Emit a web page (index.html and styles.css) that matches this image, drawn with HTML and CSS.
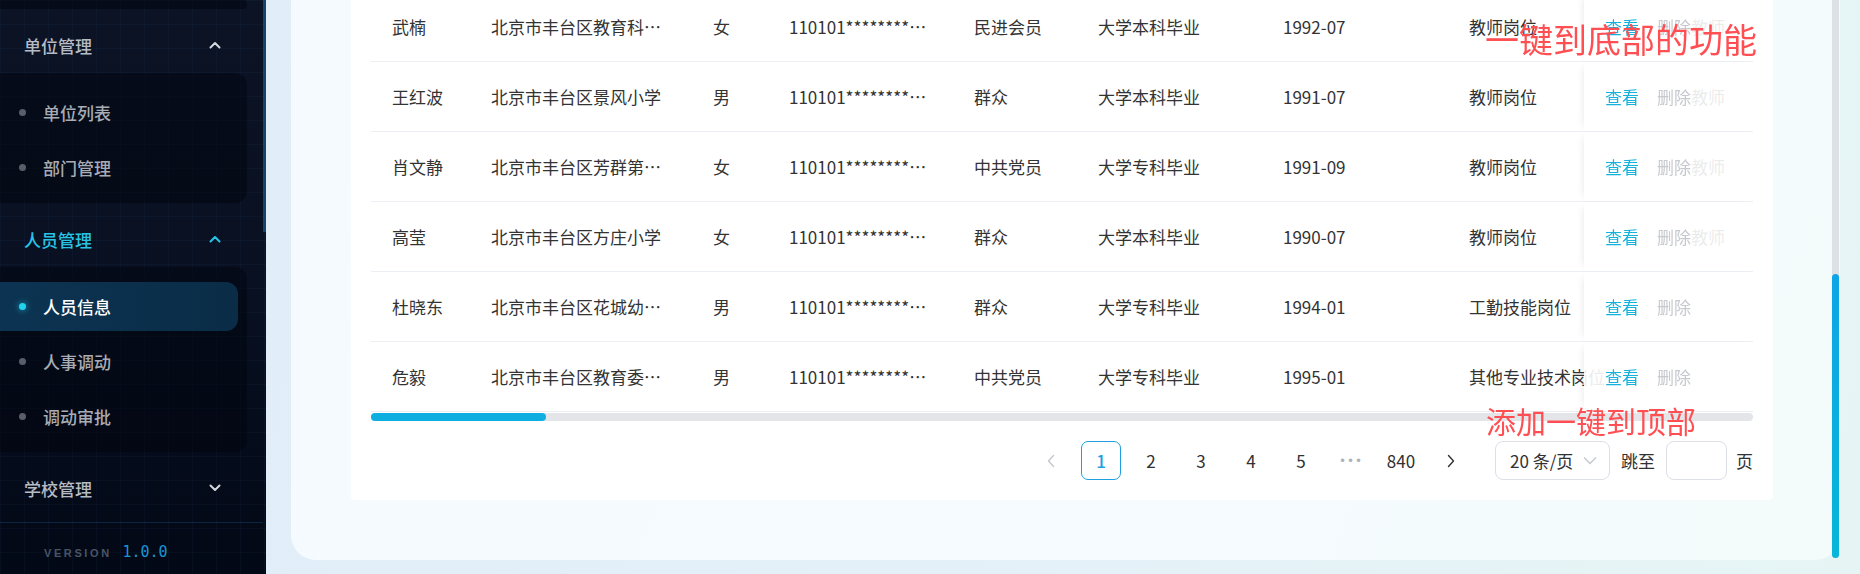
FILE: index.html
```html
<!DOCTYPE html>
<html lang="zh-CN">
<head>
    <meta charset="UTF-8">
    <meta name="viewport" content="width=device-width, initial-scale=1.0">
    <title>人员信息</title>
    <link rel="stylesheet" href="styles.css">
</head>
<body>
    <aside class="sidebar">
        <nav class="menu">
            <div class="submenu submenu-tail"></div>

            <div class="group-title">
                <span>单位管理</span>
                <svg class="chevron" width="12" height="8" viewBox="0 0 12 8"><polyline points="1.5,6.5 6,2 10.5,6.5"/></svg>
            </div>
            <ul class="submenu">
                <li class="item">单位列表</li>
                <li class="item">部门管理</li>
            </ul>

            <div class="group-title open">
                <span>人员管理</span>
                <svg class="chevron" width="12" height="8" viewBox="0 0 12 8"><polyline points="1.5,6.5 6,2 10.5,6.5"/></svg>
            </div>
            <ul class="submenu">
                <li class="item current">人员信息</li>
                <li class="item">人事调动</li>
                <li class="item">调动审批</li>
            </ul>

            <div class="group-title">
                <span>学校管理</span>
                <svg class="chevron" width="12" height="8" viewBox="0 0 12 8"><polyline points="1.5,1.5 6,6 10.5,1.5"/></svg>
            </div>
        </nav>
        <div class="version">VERSION <span class="version-num">1.0.0</span></div>
    </aside>

    <main class="main">
        <section class="card">
            <div class="panel">
                <div class="table-wrap">
                    <table class="staff-table">
                        <colgroup>
                            <col style="width:99px">
                            <col style="width:222px">
                            <col style="width:76px">
                            <col style="width:185px">
                            <col style="width:124px">
                            <col style="width:185px">
                            <col style="width:186px">
                            <col style="width:222px">
                            <col style="width:210px">
                            <col style="width:200px">
                            <col style="width:169px">
                        </colgroup>
                        <tbody>
                            <tr>
                                <td>武楠</td>
                                <td>北京市丰台区教育科学研究院</td>
                                <td>女</td>
                                <td>110101**********2046</td>
                                <td>民进会员</td>
                                <td>大学本科毕业</td>
                                <td>1992-07</td>
                                <td>教师岗位</td>
                                <td>教师</td>
                                <td></td>
                                <td class="actions"><a class="link-view">查看</a><a class="link-del">删除</a></td>
                            </tr>
                            <tr>
                                <td>王红波</td>
                                <td>北京市丰台区景风小学</td>
                                <td>男</td>
                                <td>110101**********3018</td>
                                <td>群众</td>
                                <td>大学本科毕业</td>
                                <td>1991-07</td>
                                <td>教师岗位</td>
                                <td>教师</td>
                                <td></td>
                                <td class="actions"><a class="link-view">查看</a><a class="link-del">删除</a></td>
                            </tr>
                            <tr>
                                <td>肖文静</td>
                                <td>北京市丰台区芳群第二小学</td>
                                <td>女</td>
                                <td>110101**********4527</td>
                                <td>中共党员</td>
                                <td>大学专科毕业</td>
                                <td>1991-09</td>
                                <td>教师岗位</td>
                                <td>教师</td>
                                <td></td>
                                <td class="actions"><a class="link-view">查看</a><a class="link-del">删除</a></td>
                            </tr>
                            <tr>
                                <td>高莹</td>
                                <td>北京市丰台区方庄小学</td>
                                <td>女</td>
                                <td>110101**********1223</td>
                                <td>群众</td>
                                <td>大学本科毕业</td>
                                <td>1990-07</td>
                                <td>教师岗位</td>
                                <td>教师</td>
                                <td></td>
                                <td class="actions"><a class="link-view">查看</a><a class="link-del">删除</a></td>
                            </tr>
                            <tr>
                                <td>杜晓东</td>
                                <td>北京市丰台区花城幼儿园</td>
                                <td>男</td>
                                <td>110101**********5031</td>
                                <td>群众</td>
                                <td>大学专科毕业</td>
                                <td>1994-01</td>
                                <td>工勤技能岗位</td>
                                <td></td>
                                <td></td>
                                <td class="actions"><a class="link-view">查看</a><a class="link-del">删除</a></td>
                            </tr>
                            <tr>
                                <td>危毅</td>
                                <td>北京市丰台区教育委员会</td>
                                <td>男</td>
                                <td>110101**********6612</td>
                                <td>中共党员</td>
                                <td>大学专科毕业</td>
                                <td>1995-01</td>
                                <td>其他专业技术岗位</td>
                                <td></td>
                                <td></td>
                                <td class="actions"><a class="link-view">查看</a><a class="link-del">删除</a></td>
                            </tr>
                        </tbody>
                    </table>
                </div>

                <div class="hscroll"><div class="hscroll-thumb"></div></div>

                <div class="pager">
                    <button class="pg pg-prev" disabled>
                        <svg width="8" height="14" viewBox="0 0 8 14"><polyline points="6.5,1.5 1.5,7 6.5,12.5"/></svg>
                    </button>
                    <button class="pg active">1</button>
                    <button class="pg">2</button>
                    <button class="pg">3</button>
                    <button class="pg">4</button>
                    <button class="pg">5</button>
                    <button class="pg pg-more">•••</button>
                    <button class="pg">840</button>
                    <button class="pg pg-next">
                        <svg width="8" height="14" viewBox="0 0 8 14"><polyline points="1.5,1.5 6.5,7 1.5,12.5"/></svg>
                    </button>
                    <div class="size-select">
                        <span>20 条/页</span>
                        <svg width="14" height="9" viewBox="0 0 14 9"><polyline points="1,1.5 7,7.5 13,1.5"/></svg>
                    </div>
                    <span class="jump-label">跳至</span>
                    <input class="jump-input" type="text">
                    <span class="jump-unit">页</span>
                </div>
            </div>

            <div class="vscroll"><div class="vscroll-thumb"></div></div>

            <div class="note note-bottom">一键到底部的功能</div>
            <div class="note note-top">添加一键到顶部</div>
        </section>
    </main>
</body>
</html>
```

FILE: styles.css
```css
* {
    box-sizing: border-box;
}
body {
    margin: 0;
    height: 574px;
    overflow: hidden;
    display: flex;
    font-family: "Noto Sans CJK SC", "Noto Sans", sans-serif;
    background: linear-gradient(100deg, #e0edf9 0%, #e4f1f8 60%, #e6f5f4 100%);
}

/* sidebar */
.sidebar {
    position: relative;
    width: 266px;
    flex-shrink: 0;
    display: flex;
    flex-direction: column;
    background-color: #070e1d;
    background-image:
        linear-gradient(rgba(70, 120, 180, 0.06) 1px, transparent 1px),
        linear-gradient(90deg, rgba(70, 120, 180, 0.06) 1px, transparent 1px),
        linear-gradient(180deg, #0b1325 0%, #081022 50%, #020815 100%);
    background-size: 24px 24px, 24px 24px, 100% 100%;
}
.sidebar::after {
    content: "";
    position: absolute;
    right: 0;
    top: 0;
    width: 3px;
    height: 232px;
    background: #134469;
}
.menu {
    width: 263px;
}
.submenu {
    list-style: none;
    margin: 0 16px 0 0;
    padding: 12px 0 8px;
    background: rgba(2, 6, 14, 0.55);
    border-radius: 0 12px 12px 0;
}
.submenu-tail {
    height: 9px;
    padding: 0;
}
.group-title {
    height: 56px;
    margin-top: 8px;
    padding: 0 42px 0 24px;
    display: flex;
    align-items: center;
    justify-content: space-between;
    font-size: 17px;
    font-weight: 500;
    color: #b7bbc4;
}
.group-title .chevron {
    fill: none;
    stroke: #d3d7de;
    stroke-width: 2;
    stroke-linecap: round;
    stroke-linejoin: round;
}
.group-title.open {
    color: #27c4e6;
}
.group-title.open .chevron {
    stroke: #27c4e6;
}
.item {
    position: relative;
    z-index: 0;
    height: 55px;
    line-height: 55px;
    padding-left: 43px;
    font-size: 17px;
    font-weight: 500;
    color: #a8acb5;
}
.item::before {
    content: "";
    position: absolute;
    left: 19px;
    top: 24px;
    width: 7px;
    height: 7px;
    border-radius: 50%;
    background: #595e6a;
}
.item.current {
    color: #ffffff;
}
.item.current::after {
    content: "";
    position: absolute;
    left: 0;
    right: 9px;
    top: 3px;
    bottom: 3px;
    border-radius: 0 12px 12px 0;
    background: linear-gradient(90deg, #0c3452 0%, #0a2c47 100%);
    z-index: -1;
}
.item.current::before {
    background: #22d3f0;
    box-shadow: 0 0 6px rgba(34, 211, 240, 0.7);
}
.version {
    margin-top: auto;
    width: 263px;
    height: 52px;
    padding: 21px 0 0 44px;
    border-top: 1px solid rgba(30, 90, 140, 0.35);
    font-family: "Liberation Sans", Arial, sans-serif;
    font-size: 11px;
    font-weight: bold;
    letter-spacing: 2.6px;
    line-height: 16px;
    color: #4a5466;
}
.version-num {
    margin-left: 5px;
    font-family: "DejaVu Sans Mono", monospace;
    font-size: 15px;
    font-weight: normal;
    letter-spacing: 0;
    color: #1a94d4;
}

/* main area */
.main {
    flex: 1;
    min-width: 0;
    display: flex;
    flex-direction: column;
    padding: 0 20px 14px 25px;
}
.card {
    position: relative;
    flex: 1;
    margin-top: -8px;
    padding: 0 67px 60px 60px;
    border-radius: 0 0 25px 25px;
    background: linear-gradient(110deg, #f5faff 0%, #f6fbff 55%, #f3fbfb 100%);
}
.panel {
    background: #ffffff;
    padding: 0 20px 20px;
    border-radius: 0 0 4px 4px;
}
.table-wrap {
    overflow: hidden;
}
.staff-table {
    table-layout: fixed;
    width: 1878px;
    border-collapse: separate;
    border-spacing: 0;
    font-size: 17px;
    color: #333333;
}
.staff-table td {
    height: 70px;
    padding: 0 21px;
    border-bottom: 1px solid #ebeef3;
    white-space: nowrap;
    overflow: hidden;
    text-overflow: ellipsis;
}
.staff-table td.actions {
    position: sticky;
    right: 0;
    overflow: visible;
    background: rgba(255, 255, 255, 0.9);
    box-shadow: -6px 0 8px -6px rgba(0, 0, 0, 0.1);
}
.link-view {
    color: #16b2da;
    margin-right: 18px;
}
.link-del {
    color: #c6c9cf;
}

.hscroll {
    height: 8px;
    margin-top: 1px;
    border-radius: 4px;
    background: #e4e5e8;
}
.hscroll-thumb {
    width: 175px;
    height: 8px;
    border-radius: 4px;
    background: #0eaee0;
}

/* pagination */
.pager {
    display: flex;
    justify-content: flex-end;
    align-items: center;
    gap: 10px;
    height: 39px;
    margin-top: 20px;
    font-size: 17px;
    color: #303133;
}
.pg {
    width: 40px;
    height: 39px;
    padding: 0;
    border: 1px solid transparent;
    border-radius: 7px;
    background: transparent;
    font-family: inherit;
    font-size: 17px;
    color: #303133;
    display: flex;
    align-items: center;
    justify-content: center;
}
.pg svg {
    fill: none;
    stroke: #303133;
    stroke-width: 1.4;
    stroke-linecap: round;
    stroke-linejoin: round;
}
.pg-prev svg {
    stroke: #c4c7cc;
}
.pg.active {
    border-color: #1e9fe0;
    color: #1e9fe0;
    font-weight: 500;
}
.pg-more {
    font-family: "DejaVu Sans", sans-serif;
    font-size: 12px;
    letter-spacing: 1px;
    color: #aeb1b8;
}
.size-select {
    width: 115px;
    height: 39px;
    margin-left: 14px;
    padding: 0 12px 0 14px;
    border: 1px solid #dcdfe6;
    border-radius: 8px;
    display: flex;
    align-items: center;
    justify-content: space-between;
}
.size-select svg {
    fill: none;
    stroke: #c4c7cc;
    stroke-width: 1.3;
}
.jump-label {
    margin-left: 1px;
}
.jump-input {
    width: 61px;
    height: 39px;
    margin-left: 1px;
    border: 1px solid #dcdfe6;
    border-radius: 8px;
    background: #fff;
}
.jump-unit {
    margin-left: -1px;
}

/* page scrollbar */
.vscroll {
    position: absolute;
    right: 1px;
    top: 0;
    bottom: 2px;
    width: 7px;
    border-radius: 4px;
    background: #dde1e6;
    display: flex;
    align-items: flex-end;
}
.vscroll-thumb {
    width: 7px;
    height: 284px;
    border-radius: 4px;
    background: linear-gradient(180deg, #0ea5e6 0%, #07b6d8 100%);
}

/* annotations */
.note {
    position: absolute;
    font-family: "Noto Sans CJK SC", sans-serif;
    line-height: 1;
    color: #ff4f52;
    white-space: nowrap;
}
.note-bottom {
    left: 1194px;
    top: 30px;
    font-size: 34px;
}
.note-top {
    left: 1195px;
    top: 413px;
    font-size: 30px;
}
```
